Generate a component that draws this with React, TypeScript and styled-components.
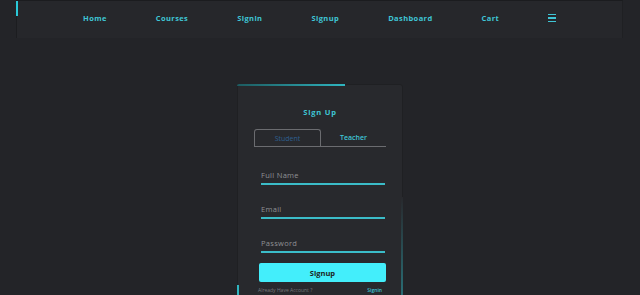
import React, { useState } from "react";
import styled, { createGlobalStyle } from "styled-components";

const Global = createGlobalStyle`
  html, body {
    margin: 0;
    padding: 0;
    background: #232428;
    font-family: "Open Sans", "Liberation Sans", sans-serif;
  }
`;

const links = ["Home", "Courses", "Signin", "Signup", "Dashboard", "Cart"];

export default function App() {
  const [role, setRole] = useState<"student" | "teacher">("student");

  return (
    <Page>
      <Global />
      <Nav>
        <NavList>
          {links.map((l) => (
            <NavItem key={l}>{l}</NavItem>
          ))}
          <Burger>
            <span />
            <span />
            <span />
          </Burger>
        </NavList>
      </Nav>

      <Main>
        <Card>
          <EdgeGlow />
          <Title>Sign Up</Title>
          <Tabs>
            <Tab $active={role === "student"} onClick={() => setRole("student")}>
              Student
            </Tab>
            <Tab $active={role === "teacher"} onClick={() => setRole("teacher")}>
              Teacher
            </Tab>
          </Tabs>
          <Fields>
            <Field>
              <Input placeholder="Full Name" />
            </Field>
            <Field>
              <Input placeholder="Email" />
            </Field>
            <Field>
              <Input placeholder="Password" type="password" />
            </Field>
          </Fields>
          <Button>Signup</Button>
          <Footer>
            <span>Already Have Account ?</span>
            <FootLink>Signin</FootLink>
          </Footer>
        </Card>
      </Main>
    </Page>
  );
}

/* ---- styles ---- */
const Page = styled.div`
  width: 640px;
  height: 295px;
  overflow: hidden;
  background: #232428;
`;

const Nav = styled.nav`
  position: relative;
  margin: 0 17px 0 16px;
  height: 38px;
  background: #26272b;
  border-top: 1px solid #1b1c1f;
  border-left: 1px solid #1c1d20;
  border-right: 1px solid #1f2023;
  box-sizing: border-box;
  &::before {
    content: "";
    position: absolute;
    left: -1px;
    top: 0;
    width: 2px;
    height: 15px;
    background: #2ac9d8;
  }
`;

const NavList = styled.ul`
  list-style: none;
  margin: 0;
  padding: 0 0 3px 66px;
  height: 100%;
  box-sizing: border-box;
  display: flex;
  align-items: center;
  gap: 49px;
`;

const NavItem = styled.li`
  color: #3fc6d6;
  font-size: 7.5px;
  font-weight: 700;
  letter-spacing: 0.4px;
  line-height: 10px;
`;

const Burger = styled.li`
  display: flex;
  flex-direction: column;
  gap: 2px;
  span {
    display: block;
    width: 8px;
    height: 1.5px;
    background: #3fc6d6;
  }
`;

const Main = styled.main`
  display: flex;
  justify-content: center;
  padding-top: 46px;
`;

const Card = styled.div`
  position: relative;
  width: 166px;
  height: 240px;
  box-sizing: border-box;
  background: #28292d;
  border: 1px solid #1f2023;
  border-radius: 3px;
  padding: 0 16px;
  display: flex;
  flex-direction: column;
  align-items: stretch;
  &::before {
    content: "";
    position: absolute;
    left: -1px;
    top: -1px;
    width: 108px;
    height: 2px;
    background: linear-gradient(90deg, #1d5b60, #2fb5c0);
    border-top-left-radius: 3px;
  }
  &::after {
    content: "";
    position: absolute;
    right: -1px;
    top: 112px;
    width: 2px;
    height: 140px;
    background: linear-gradient(180deg, #28292d, #2a8a93);
  }
`;

const EdgeGlow = styled.span`
  position: absolute;
  left: -1px;
  top: 200px;
  width: 2px;
  height: 40px;
  background: #2fb5c0;
`;

const Title = styled.h2`
  margin: 22px 0 0;
  text-align: center;
  color: #3fc6d6;
  font-size: 7.5px;
  line-height: 10px;
  font-weight: 700;
  letter-spacing: 0.8px;
`;

const Tabs = styled.div`
  display: flex;
  margin-top: 12px;
  border-bottom: 1px solid #6b6c70;
`;

const Tab = styled.button<{ $active: boolean }>`
  flex: 1;
  height: 17px;
  font-family: "Open Sans", "Liberation Sans", sans-serif;
  font-size: 7px;
  font-weight: ${({ $active }) => ($active ? 400 : 600)};
  color: ${({ $active }) => ($active ? "#2e5f8f" : "#3fc6d6")};
  background: transparent;
  border: ${({ $active }) => ($active ? "1px solid #6b6c70" : "none")};
  border-bottom: none;
  border-radius: 3px 3px 0 0;
  padding: 0;
  cursor: pointer;
`;

const Fields = styled.div`
  display: flex;
  flex-direction: column;
  gap: 17px;
  margin-top: 21px;
  padding: 0 1px 0 7px;
`;

const Field = styled.div`
  border-bottom: 2px solid #3bbcc8;
`;

const Input = styled.input`
  display: block;
  width: 100%;
  box-sizing: border-box;
  background: transparent;
  border: none;
  outline: none;
  height: 15px;
  padding: 0 0 2px;
  font-family: "Open Sans", "Liberation Sans", sans-serif;
  font-size: 7.5px;
  letter-spacing: 0.3px;
  color: #ddd;
  &::placeholder {
    color: #8f9094;
  }
`;

const Button = styled.button`
  margin: 10px 0 0 5px;
  height: 19px;
  background: #43eefb;
  border: none;
  border-radius: 2px;
  font-family: "Open Sans", "Liberation Sans", sans-serif;
  font-size: 7.5px;
  font-weight: 700;
  color: #1d1e22;
  cursor: pointer;
`;

const Footer = styled.div`
  display: flex;
  justify-content: space-between;
  margin-top: 4px;
  padding: 0 4px 0 4px;
  font-size: 5px;
  line-height: 8px;
  color: #77787c;
`;

const FootLink = styled.a`
  color: #3fc6d6;
  font-weight: 600;
`;
